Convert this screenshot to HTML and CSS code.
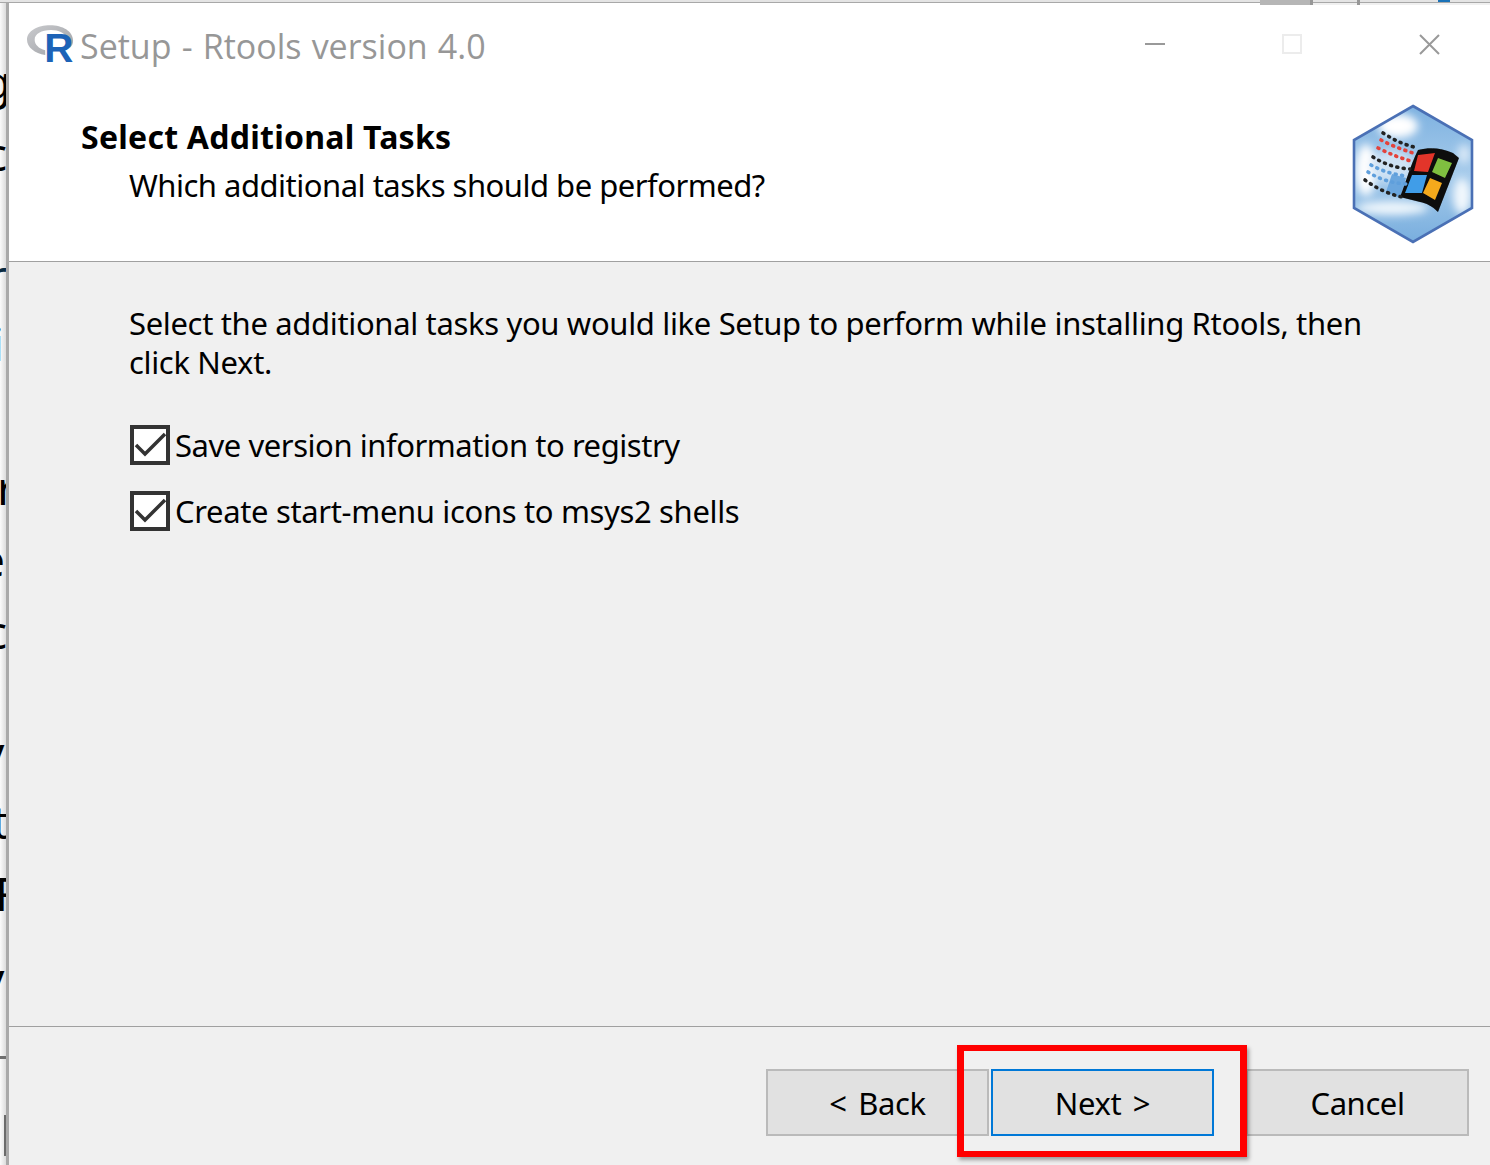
FILE: index.html
```html
<!DOCTYPE html>
<html lang="en">
<head>
<meta charset="utf-8">
<title>Setup - Rtools version 4.0</title>
<link rel="stylesheet" href="styles.css">
</head>
<body>
<div class="screen">
  <div class="backdrop">
    <span class="ch ch-g">g</span><span class="ch ch-c1">c</span><span class="ch ch-r1">r</span><span class="ch ch-i">i</span><span class="ch ch-r2">r</span><span class="ch ch-e">e</span><span class="ch ch-c2">c</span><span class="ch ch-v1">v</span><span class="ch ch-t">t</span><span class="ch ch-f">F</span><span class="ch ch-v2">v</span>
    <span class="rule-mark"></span><span class="bar-mark"></span>
  </div>
  <main class="window">
    <header class="head">
      <div class="titlebar">
        <svg class="r-logo" viewBox="0 0 50 42" aria-hidden="true">
          <defs>
            <linearGradient id="ring" x1="0" y1="0" x2="1" y2="1"><stop offset="0" stop-color="#c9cacd"/><stop offset="1" stop-color="#9fa1a6"/></linearGradient>
          </defs>
          <path fill="url(#ring)" fill-rule="evenodd" d="M24 1C37 1 48 7 48 17 48 20 47 22 45 24L39 24C42 21 43 19 42 16 40 9 33 6 25 6 15 6 8 10 8 16 8 21 12 25 19 27L19 32C8 30 0 24 0 16 0 7 11 1 24 1Z"/>
          <text class="r-letter" x="18" y="39">R</text>
        </svg>
        <h1 class="title">Setup - Rtools version 4.0</h1>
        <div class="controls">
          <svg class="ctl" viewBox="0 0 22 22" aria-hidden="true"><path d="M0 10H20" class="ctl-min"/></svg>
          <svg class="ctl" viewBox="0 0 22 22" aria-hidden="true"><rect x="1" y="1" width="18" height="18" class="ctl-max"/></svg>
          <svg class="ctl" viewBox="0 0 22 22" aria-hidden="true"><path d="M1 1L20 20M20 1L1 20" class="ctl-close"/></svg>
        </div>
      </div>
      <div class="head-body">
        <div class="head-text">
          <h2 class="heading">Select Additional Tasks</h2>
          <p class="subheading">Which additional tasks should be performed?</p>
        </div>
        <svg class="wizard" viewBox="0 0 122 140" aria-hidden="true">
          <defs>
            <linearGradient id="sky" x1="0" y1="0" x2="0" y2="1"><stop offset="0" stop-color="#7db1e0"/><stop offset="0.5" stop-color="#a6cbeb"/><stop offset="1" stop-color="#79aede"/></linearGradient>
            <filter id="soft" x="-30%" y="-30%" width="160%" height="160%"><feGaussianBlur stdDeviation="4.500"/></filter>
            <filter id="soft2" x="-10%" y="-10%" width="120%" height="120%"><feGaussianBlur stdDeviation="0.6"/></filter>
            <clipPath id="hex"><path d="M61 2L120 36V104L61 138 2 104V36Z"/></clipPath>
          </defs>
          <path d="M61 2L120 36V104L61 138 2 104V36Z" fill="url(#sky)"/>
          <g clip-path="url(#hex)" filter="url(#soft)">
            <ellipse cx="46" cy="22" rx="20" ry="12" fill="#fff"/>
            <ellipse cx="14" cy="66" rx="10" ry="26" fill="#fff"/>
            <ellipse cx="40" cy="104" rx="36" ry="7" fill="#eef6fc"/>
            <ellipse cx="110" cy="92" rx="9" ry="18" fill="#f2f8fd"/>
            <ellipse cx="112" cy="50" rx="6" ry="10" fill="#dceaf8"/>
            <ellipse cx="40" cy="62" rx="22" ry="16" fill="#cfe2f4"/>
          </g>
          <path d="M61 2L120 36V104L61 138 2 104V36Z" fill="none" stroke="#4a70b5" stroke-width="2.6"/>
          <g filter="url(#soft2)">
            <path d="M40 70L54 74 48 94 34 88Z" fill="#6aa6de"/>
            <path d="M66 46C78 43 90 44 101 49L107 54 86 108C80 102 74 99 68 98L48 93C52 84 58 62 66 46Z" fill="#0a0a0a"/>
            <path d="M66 51L83 49 76 68 62 67Z" fill="#e2352a"/>
            <path d="M86 54L100 59 93 74 80 68Z" fill="#7fbf3f"/>
            <path d="M60 71L75 71 70 89 53 89Z" fill="#3f9de8"/>
            <path d="M78 74L90 79 83 96 71 89Z" fill="#f4a91f"/>
            <g fill="none" stroke-linecap="round" stroke-dasharray="1 5.500" stroke-width="3.600">
              <path d="M31 29C42 36 52 41 66 44" stroke="#222"/>
              <path d="M29 36C40 42 52 46 64 50" stroke="#e4423a"/>
              <path d="M26 44C38 50 48 54 62 58" stroke="#e4423a"/>
              <path d="M21 53C32 60 44 64 58 65" stroke="#222"/>
              <path d="M19 61C30 67 42 71 56 72" stroke="#5f9fdc"/>
              <path d="M16 68C27 75 39 79 54 80" stroke="#5f9fdc"/>
              <path d="M13 76C24 84 36 90 50 93" stroke="#222"/>
            </g>
          </g>
        </svg>
      </div>
    </header>
    <section class="body">
      <p class="intro">Select the additional tasks you would like Setup to perform while installing Rtools, then click Next.</p>
      <ul class="tasks">
        <li class="task">
          <svg class="check" viewBox="0 0 40 40" aria-hidden="true"><rect x="2" y="2" width="36" height="36" class="check-box"/><path d="M6 20L15 29 35 9" class="check-mark"/></svg>
          <span class="task-save">Save version information to registry</span>
        </li>
        <li class="task">
          <svg class="check" viewBox="0 0 40 40" aria-hidden="true"><rect x="2" y="2" width="36" height="36" class="check-box"/><path d="M6 20L15 29 35 9" class="check-mark"/></svg>
          <span class="task-create">Create start-menu icons to msys2 shells</span>
        </li>
      </ul>
    </section>
    <footer class="foot">
      <button class="btn btn-back">&lt; Back</button>
      <button class="btn btn-next">Next &gt;</button>
      <button class="btn btn-cancel">Cancel</button>
    </footer>
    <div class="callout"></div>
  </main>
  <div class="top-strip">
    <span class="strip-band"></span><span class="strip-a"></span><span class="strip-b"></span><span class="strip-c"></span><span class="strip-d"></span>
  </div>
</div>
</body>
</html>
```

FILE: styles.css
```css
* { box-sizing: border-box; }
html, body { margin: 0; padding: 0; }
body {
  width: 1490px;
  height: 1165px;
  overflow: hidden;
  background: #fff;
  font-family: "Noto Sans", "Liberation Sans", sans-serif;
  color: #000;
}
.screen {
  position: relative;
  width: 1490px;
  height: 1165px;
  overflow: hidden;
  padding: 3px 0 0 6px;
  background: linear-gradient(90deg, #fbfbfb 0, #dcdcdc 6px);
}

/* clipped page behind the dialog */
.backdrop {
  position: absolute;
  left: 0;
  top: 0;
  width: 7px;
  height: 1165px;
  overflow: hidden;
}
.ch {
  position: absolute;
  font-size: 46px;
  line-height: 46px;
  color: #000;
}
.ch-g { top: 58px; left: -17px; }
.ch-c1 { top: 130px; left: -15px; }
.ch-r1 { top: 252px; left: -12px; color: #0a2a40; }
.ch-i { top: 320px; left: -8px; }
.ch-r2 { top: 464px; left: -3px; }
.ch-e { top: 536px; left: -21px; }
.ch-c2 { top: 608px; left: -15px; }
.ch-v1 { top: 729px; left: -19px; }
.ch-t { top: 798px; left: -8px; }
.ch-f { top: 870px; left: -5px; }
.ch-v2 { top: 955px; left: -19px; }
.rule-mark {
  position: absolute;
  left: 0;
  top: 1056px;
  width: 7px;
  height: 3px;
  background: #6f6f6f;
}
.bar-mark {
  position: absolute;
  left: 4px;
  top: 1115px;
  width: 3px;
  height: 41px;
  background: #6b6b6b;
}

/* top edge of whatever is behind the window */
.top-strip {
  position: absolute;
  left: 0;
  top: 0;
  width: 1490px;
  height: 3px;
  background: linear-gradient(180deg, #e4e4e4 0, #e4e4e4 2px, #a8a8a8 2px);
}
.top-strip span { position: absolute; top: 0; }
.strip-band { left: 1260px; top: 3px !important; width: 230px; height: 2px; background: #f0f0f0; }
.strip-a { left: 1260px; width: 50px; height: 5px; background: #b6b6b6; }
.strip-b { left: 1310px; width: 3px; height: 5px; background: #979797; }
.strip-c { left: 1357px; width: 3px; height: 5px; background: #979797; }
.strip-d { left: 1438px; width: 12px; height: 2px; background: #1a72b8; }

.window {
  position: relative;
  display: flex;
  flex-direction: column;
  height: 1162px;
  width: 1484px;
  border-left: 3px solid #a9a9a9;
  background: #f0f0f0;
}

/* header */
.head {
  flex: 0 0 259px;
  background: #fff;
  border-bottom: 1px solid #a0a0a0;
  display: flex;
  flex-direction: column;
}
.titlebar {
  display: flex;
  align-items: flex-start;
  height: 86px;
  padding: 21px 0 0 18px;
}
.r-logo { width: 48px; height: 41px; flex: none; }
.r-letter {
  font-family: "Liberation Sans", sans-serif;
  font-weight: 700;
  font-size: 42px;
  fill: #1c63b7;
}
.title {
  margin: 0 0 0 5px;
  font-family: "Open Sans", "Noto Sans", sans-serif;
  font-size: 34px;
  font-weight: 400;
  line-height: 44px;
  word-spacing: 1.3px;
  color: #979797;
  white-space: nowrap;
}
.controls {
  margin-left: auto;
  display: flex;
  gap: 115px;
  padding: 10px 49px 0 0;
}
.ctl { width: 22px; height: 22px; display: block; }
.ctl-min { stroke: #999; stroke-width: 2; fill: none; }
.ctl-max { stroke: #ececec; stroke-width: 2; fill: none; }
.ctl-close { stroke: #999; stroke-width: 2; fill: none; }

.head-body {
  flex: 1;
  display: flex;
  justify-content: space-between;
  padding: 0 16px 0 72px;
}
.head-text { padding-top: 26px; }
.heading {
  margin: 0;
  font-size: 32px;
  font-weight: 700;
  line-height: 44px;
  letter-spacing: 0.25px;
  white-space: nowrap;
}
.subheading {
  margin: 4px 0 0 48px;
  font-size: 31px;
  line-height: 44px;
  letter-spacing: -0.5px;
  white-space: nowrap;
}
.wizard { width: 122px; height: 140px; margin-top: 15px; flex: none; }

/* content */
.body {
  flex: 1;
  padding: 42px 100px 0 120px;
  border-bottom: 1px solid #a0a0a0;
}
.intro {
  margin: 0;
  font-size: 31px;
  line-height: 39px;
  letter-spacing: -0.34px;
}
.tasks {
  list-style: none;
  margin: 42px 0 0 1px;
  padding: 1px 0 0;
  display: flex;
  flex-direction: column;
  gap: 26px;
}
.task {
  display: flex;
  align-items: center;
  gap: 5px;
  height: 40px;
  font-size: 31px;
  white-space: nowrap;
}
.task-save { letter-spacing: -0.45px; }
.task-create { letter-spacing: -0.35px; }
.check { width: 40px; height: 40px; flex: none; display: block; }
.check-box { fill: #fff; stroke: #333; stroke-width: 4; }
.check-mark { fill: none; stroke: #333; stroke-width: 3.5; }

/* footer */
.foot {
  flex: 0 0 138px;
  display: flex;
  align-items: flex-start;
  padding: 42px 0 0 757px;
}
.btn {
  width: 223px;
  height: 67px;
  padding: 0;
  background: #e1e1e1;
  border: 2px solid #bababa;
  font-family: inherit;
  font-size: 31px;
  letter-spacing: -0.4px;
  word-spacing: 4px;
  color: #000;
}
.btn-next { margin-left: 2px; border-color: #0078d7; }
.btn-cancel { margin-left: 32px; }

/* annotation drawn over the dialog */
.callout {
  position: absolute;
  left: 948px;
  top: 1042px;
  width: 290px;
  height: 112px;
  border: solid #f00;
  border-width: 6px 7px;
  box-shadow: 2px 3px 4px rgba(0, 0, 0, 0.35);
}
```
